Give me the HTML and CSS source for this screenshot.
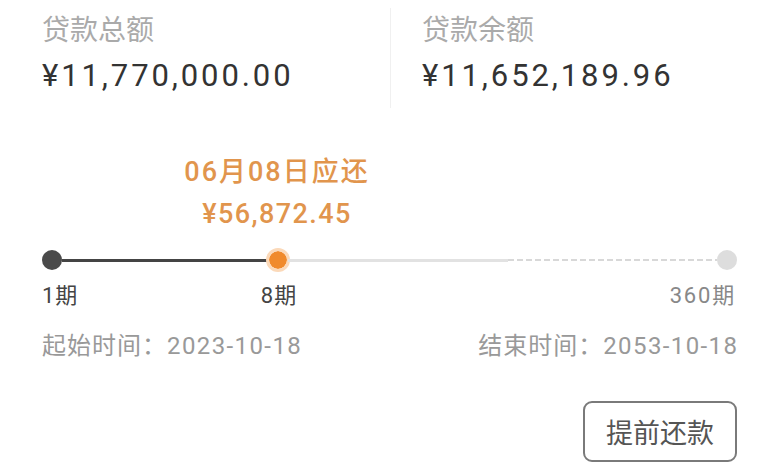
FILE: index.html
```html
<!DOCTYPE html>
<html lang="zh-CN">
<head>
<meta charset="utf-8">
<link rel="stylesheet" href="styles.css">
</head>
<body>
<div class="page">
  <div class="summary">
    <div class="col col-left">
      <div class="label">贷款总额</div>
      <div class="amount">¥11,770,000.00</div>
    </div>
    <div class="divider"></div>
    <div class="col col-right">
      <div class="label">贷款余额</div>
      <div class="amount">¥11,652,189.96</div>
    </div>
  </div>

  <div class="timeline">
    <div class="due">
      <div class="due-date">06月08日应还</div>
      <div class="due-amount">¥56,872.45</div>
    </div>
    <div class="track">
      <span class="dot dot-start"></span>
      <span class="line line-done"></span>
      <span class="dot dot-current"></span>
      <span class="line line-rest"></span>
      <span class="line line-dashed"></span>
      <span class="dot dot-end"></span>
    </div>
    <div class="periods">
      <span class="period period-first">1期</span>
      <span class="period period-current">8期</span>
      <span class="period period-last">360期</span>
    </div>
    <div class="dates">
      <span class="date"><span class="date-key">起始时间：</span><span class="date-val">2023-10-18</span></span>
      <span class="date"><span class="date-key">结束时间：</span><span class="date-val">2053-10-18</span></span>
    </div>
  </div>

  <div class="actions">
    <button class="btn-prepay">提前还款</button>
  </div>
</div>
</body>
</html>
```

FILE: styles.css
```css
* { box-sizing: border-box; }
html, body {
  margin: 0;
  padding: 0;
  background: #ffffff;
}
body {
  font-family: Roboto, "Noto Sans CJK SC", sans-serif;
  color: #333333;
  width: 775px;
  height: 474px;
  overflow: hidden;
}
.page {
  padding: 8px 38px 0 42px;
}
.summary {
  display: flex;
  align-items: stretch;
  height: 100px;
}
.col {
  display: flex;
  flex-direction: column;
}
.col-left { width: 348px; }
.col-right { padding-left: 31px; }
.divider {
  width: 1px;
  background: #f0f0f0;
}
.label {
  font-family: "Noto Sans CJK SC", sans-serif;
  font-size: 28px;
  line-height: 40px;
  color: #aaaaaa;
}
.amount {
  font-size: 31px;
  line-height: 40px;
  margin-top: 8px;
  color: #333333;
  letter-spacing: 2.9px;
  white-space: nowrap;
}

.timeline {
  margin-top: 46px;
}
.due {
  width: 240px;
  margin-left: 115px;
  text-align: center;
  color: #e1954d;
  font-weight: 500;
}
.due-date {
  font-size: 27px;
  line-height: 36px;
  letter-spacing: 2px;
}
.due-amount {
  font-size: 27px;
  line-height: 36px;
  margin-top: 6px;
  letter-spacing: 1.4px;
}
.track {
  display: flex;
  align-items: center;
  height: 24px;
  margin-top: 16px;
}
.dot {
  flex: none;
  border-radius: 50%;
}
.dot-start {
  width: 20px;
  height: 20px;
  background: #4a4a4a;
}
.dot-current {
  width: 24px;
  height: 24px;
  background: #f08a2c;
  border: 3px solid #fbd9b9;
  background-clip: padding-box;
  margin-left: -2px;
  margin-right: -2px;
}
.dot-end {
  width: 20px;
  height: 20px;
  background: #dddddd;
}
.line {
  height: 3px;
}
.line-done {
  flex: none;
  width: 206px;
  background: #444444;
}
.line-rest {
  flex: none;
  width: 220px;
  background: #e2e2e2;
}
.line-dashed {
  flex: 1;
  height: 2px;
  background: repeating-linear-gradient(to right, #d8d8d8 0 6px, transparent 6px 9px);
}
.periods {
  display: flex;
  align-items: center;
  margin-top: 8px;
  font-size: 22px;
  line-height: 32px;
  color: #444444;
  letter-spacing: 1px;
  white-space: nowrap;
}
.period-first { width: 203px; }
.period-current { width: 68px; text-align: center; }
.period-last { margin-left: auto; color: #888888; margin-right: 1px; letter-spacing: 1.8px; }
.dates {
  display: flex;
  justify-content: space-between;
  margin-top: 16px;
  font-size: 24px;
  line-height: 32px;
  color: #999999;
  white-space: nowrap;
}
.date { flex: none; }
.date-key {
  font-family: "Noto Sans CJK SC", sans-serif;
  font-size: 24px;
  letter-spacing: 1px;
}
.date-val {
  letter-spacing: 1.4px;
  margin-right: -1.4px;
}
.actions {
  display: flex;
  justify-content: flex-end;
  margin-top: 39px;
}
.btn-prepay {
  width: 154px;
  height: 61px;
  border: 2px solid #7a7a7a;
  border-radius: 9px;
  background: #ffffff;
  font-family: "Noto Sans CJK SC", sans-serif;
  font-size: 27px;
  color: #555555;
  padding: 0;
}
```
